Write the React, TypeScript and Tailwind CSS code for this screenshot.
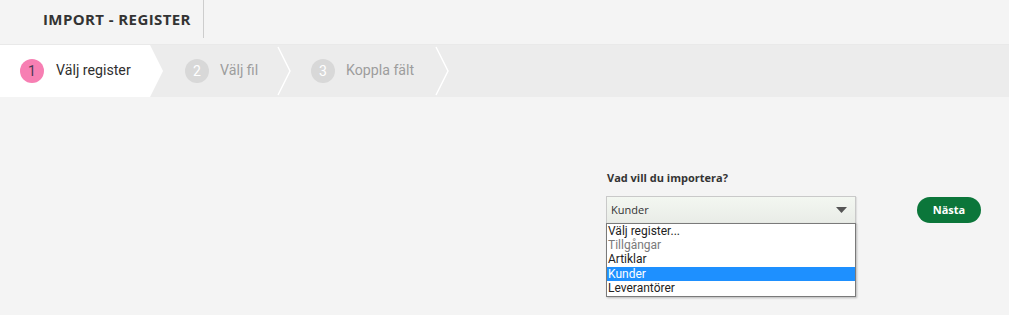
import React from "react";

function Chevron() {
  return (
    <svg width="14" height="52" viewBox="0 0 14 52" className="shrink-0">
      <polyline points="1,2 13,26 1,50" fill="none" stroke="#ffffff" strokeWidth="1.5" />
    </svg>
  );
}

export default function App() {
  return (
    <div className="w-[1009px] h-[315px] bg-[#f4f4f4] overflow-hidden font-['Roboto',sans-serif]">
      {/* header */}
      <div className="h-[44px] flex items-start">
        <div className="h-[38px] pl-[43px] pr-[12px] border-r border-[#cdcdcd] flex items-center">
          <span className="font-['Open_Sans',sans-serif] font-bold text-[15px] text-[#333] tracking-[0.4px]">
            IMPORT - REGISTER
          </span>
        </div>
      </div>

      {/* steps */}
      <div className="h-[53px] bg-[#ececec] border-t border-[#e9e9e9] flex items-center">
        <div className="w-[163px] h-full bg-white flex items-center pl-[20px] [clip-path:polygon(0_0,150px_0,163px_50%,150px_100%,0_100%)]">
          <div className="w-[24px] h-[24px] rounded-full bg-[#f77fb3] flex items-center justify-center text-[14px] text-[#4a3a55]">
            1
          </div>
          <span className="ml-[12px] text-[14.2px] text-[#2f2f2f]">Välj register</span>
        </div>
        <div className="ml-[22px] w-[24px] h-[24px] rounded-full bg-[#d8d8d8] flex items-center justify-center text-[14px] text-white">
          2
        </div>
        <span className="ml-[11px] w-[57px] text-[14.2px] text-[#9d9d9d]">Välj fil</span>
        <Chevron />
        <div className="ml-[20px] w-[24px] h-[24px] rounded-full bg-[#d8d8d8] flex items-center justify-center text-[14px] text-white">
          3
        </div>
        <span className="ml-[11px] w-[89px] text-[14.2px] text-[#9d9d9d]">Koppla fält</span>
        <Chevron />
      </div>

      {/* form */}
      <div className="pl-[607px] pt-[74px]">
        <div className="font-['Open_Sans',sans-serif] font-bold text-[11px] leading-[14px] text-[#333]">
          Vad vill du importera?
        </div>
        <div className="mt-[11px] flex items-start">
          <div className="relative -ml-[1px] w-[250px]">
            <div className="h-[28px] border border-[#c9c9c9] bg-gradient-to-b from-[#f3f7f1] to-[#e9ece7] flex items-center justify-between pl-[4px] pr-[8px] shadow-[1px_1px_1px_rgba(0,0,0,0.08)]">
              <span className="font-['Open_Sans',sans-serif] text-[11px] text-[#333]">Kunder</span>
              <svg width="11" height="6" viewBox="0 0 11 6">
                <polygon points="0,0 11,0 5.5,6" fill="#555" />
              </svg>
            </div>
            <div className="absolute left-0 top-[27px] w-[250px] bg-white border border-[#7a7a7a] shadow-[1px_1px_2px_rgba(0,0,0,0.25)] text-[12px] leading-[14px] pb-[1px]">
              <div className="pl-[1px] text-[#222]">Välj register...</div>
              <div className="pl-[1px] text-[#7a7a7a]">Tillgångar</div>
              <div className="pl-[1px] text-[#222]">Artiklar</div>
              <div className="pl-[1px] mt-[1px] bg-[#1e90ff] text-white">Kunder</div>
              <div className="pl-[1px] text-[#222]">Leverantörer</div>
            </div>
          </div>
          <button className="ml-[61px] mt-[1px] w-[64px] h-[26px] rounded-full bg-[#0b763a] text-white font-['Open_Sans',sans-serif] font-bold text-[11px] flex items-center justify-center">
            Nästa
          </button>
        </div>
      </div>
    </div>
  );
}
